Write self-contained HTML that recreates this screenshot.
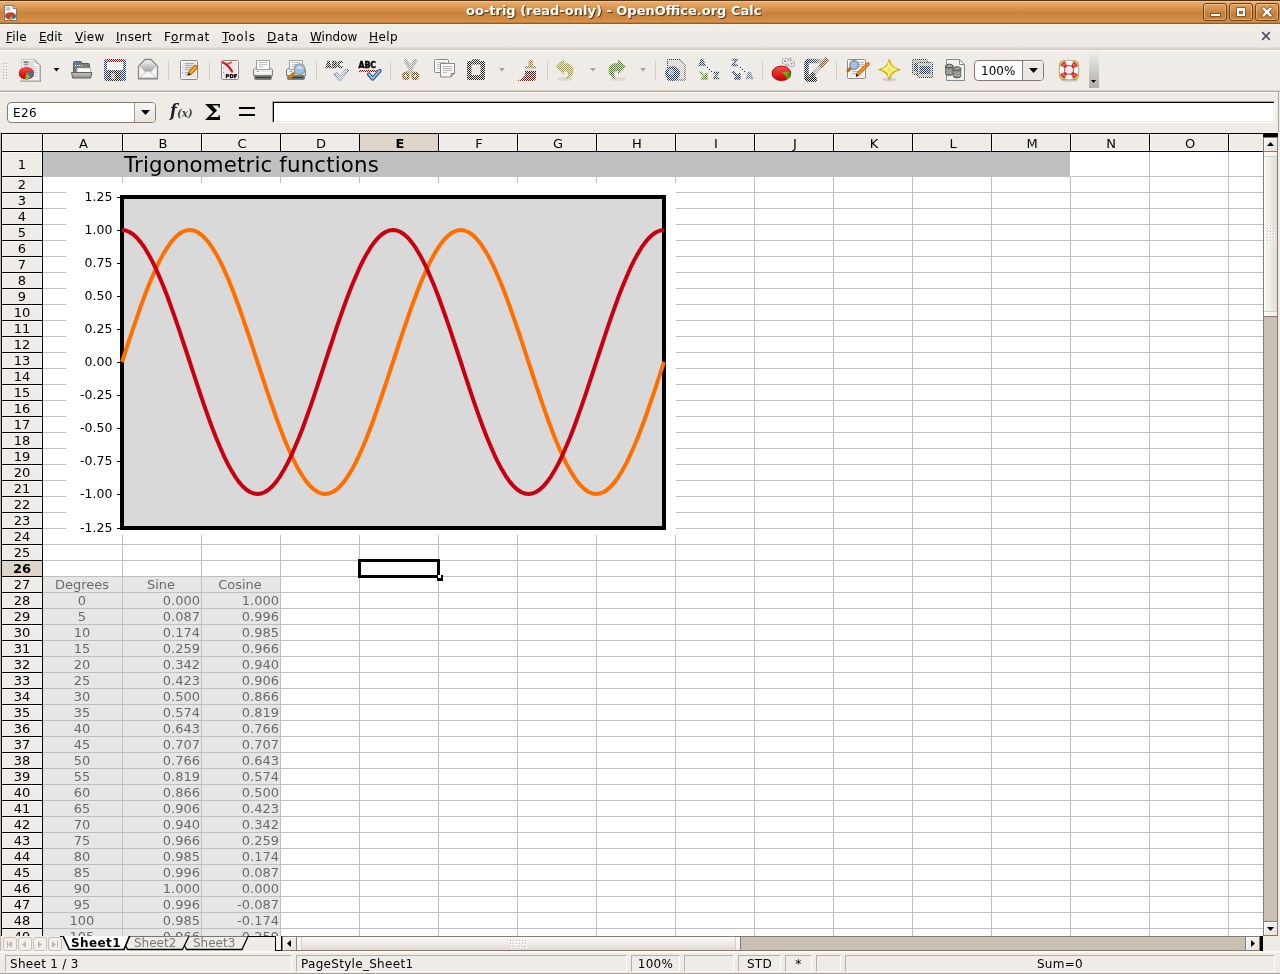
<!DOCTYPE html>
<html lang="en"><head><meta charset="utf-8"><title>oo-trig (read-only) - OpenOffice.org Calc</title>
<style>
*{box-sizing:border-box;margin:0;padding:0}
html,body{width:1280px;height:974px;overflow:hidden;background:#efebe7}
body{font-family:"DejaVu Sans","Liberation Sans",sans-serif;font-size:12px;color:#000;position:relative}
#w{position:absolute;left:0;top:0;width:1280px;height:974px;will-change:transform}
.a{position:absolute}
.t{position:absolute;white-space:nowrap;line-height:14px}
#title{left:0;top:0;width:1280px;height:24px;background:linear-gradient(#4f3318 0,#4f3318 1px,#f3c18b 1px,#f3c18b 2px,#e9ac6b 2px,#dc9a56 7px,#cd873f 12.5px,#c8823a 12.5px,#ce8842 17px,#d6914b 22px,#c07d3b 22px,#c07d3b 23px,#8a5e32 23px,#8a5e32 24px)}
#title .tt{left:466px;top:3px;font-weight:bold;font-size:13px;line-height:16px;color:#fff;text-shadow:1px 1px 1px #4a2e12}
.wb{position:absolute;top:3px;width:24px;height:18px;border:1px solid #6b4420;border-radius:3px;background:linear-gradient(#e2a365,#cf8a48 45%,#c37e3c 55%,#c8833f);box-shadow:inset 0 0 0 1px rgba(255,220,180,.45)}
#menu{left:0;top:24px;width:1280px;height:25px;background:linear-gradient(#f8f6f3 0,#f8f6f3 1px,#f1eeea 1px,#ebe7e2 24px)}
#menu span{position:absolute;top:6px;line-height:14px;font-size:12px}
#menu u{text-decoration:underline;text-underline-offset:1px}

#sheet{left:1px;top:133px;width:1262px;height:803px;background:#fff;overflow:hidden;border-left:1px solid #000;border-top:1px solid #000}
/* inside #sheet coordinates are offset by (2,134) */
.ch{position:absolute;top:0;height:18px;background:#efebe7;border-right:1px solid #000;border-bottom:1px solid #000;text-align:center;line-height:19px;font-size:13px;box-shadow:inset 1px 1px 0 #f9f7f5,inset 0 -1px 0 #f9f7f5;padding-left:2px}
.rh{position:absolute;left:0;width:41px;background:#efebe7;border-right:1px solid #000;border-bottom:1px solid #000;text-align:center;font-size:13px;box-shadow:inset 1px 1px 0 #f9f7f5,inset -1px 0 0 #f9f7f5}
.sel{background:#dfd6cb;font-weight:bold;box-shadow:none}
.gl{position:absolute;background:#c0c0c0}
.dc{position:absolute;height:15px;line-height:15px;font-size:13px;color:#6a6a6a;white-space:nowrap}

.sbb{position:absolute;border:1px solid #8a7a6a;background:linear-gradient(135deg,#f8f7f5,#e6e0da);box-shadow:inset 1px 1px 0 #fff}
.trough{position:absolute;background:#cabfb4;border:1px solid #8a7a6a}
.sf{position:absolute;top:955px;height:17px;border:1px solid;border-color:#b9b0a6 #fff #fff #b9b0a6;font-size:12px;letter-spacing:.3px;line-height:14px;padding-top:1px;white-space:nowrap;overflow:hidden}
.nb{position:absolute;top:937px;width:14px;height:14px;border:1px solid #cbbfb2;border-radius:3px;background:#f3f0ec}

#fbar .nbx{position:absolute;left:7px;top:102px;width:149px;height:21px;border:1px solid #8a7a6a;border-radius:4px;background:#fff;overflow:hidden}

#tb text{font-family:"DejaVu Sans","Liberation Sans",sans-serif}
</style></head>
<body>
<div id="w"><div id="title" class="a"><svg class="a" style="left:4px;top:5px" width="13" height="16" viewBox="1 0 12 16.500" preserveAspectRatio="none"><path d="M1.5 .5h8l3 3v12.5h-11z" fill="#fbfbfb" stroke="#7a7a7a"/><path d="M9.5 .5v3h3" fill="#ddd" stroke="#7a7a7a"/><path d="M3 3h4M3 5h4" stroke="#999"/><ellipse cx="7" cy="11.300" rx="5" ry="3.800" fill="#c8402a"/><path d="M7.500 11l4.500-.2a5 3.800 0 0 1-2.400 3.700z" fill="#1a7a9a"/><path d="M7.500 11l2 3.600a5 3.800 0 0 1-3 .5z" fill="#c8c830"/></svg><div class="t tt">oo-trig (read-only) - OpenOffice.org Calc</div><div class="wb" style="left:1203px"><i class="a" style="left:7px;top:10px;width:9px;height:2px;background:#fff;box-shadow:0 0 0 1px rgba(90,50,15,.55)"></i></div><div class="wb" style="left:1229px"><i class="a" style="left:7px;top:4px;width:8px;height:8px;border:2px solid #fff;border-top-width:3px;box-shadow:0 0 0 1px rgba(90,50,15,.55),inset 0 0 0 1px rgba(90,50,15,.55)"></i></div><div class="wb" style="left:1255px"><svg class="a" style="left:5px;top:2px" width="12" height="12" viewBox="0 0 12 12"><path d="M2.5 2.5l7 7M9.5 2.5l-7 7" stroke="#6b4420" stroke-width="4.2" stroke-linecap="round" opacity=".6"/><path d="M2.5 2.5l7 7M9.5 2.5l-7 7" stroke="#fff" stroke-width="2.4" stroke-linecap="round"/></svg></div></div><div id="menu" class="a"><span style="left:6px;letter-spacing:0.15px"><u>F</u>ile</span><span style="left:39px;letter-spacing:0px"><u>E</u>dit</span><span style="left:75px;letter-spacing:0.25px"><u>V</u>iew</span><span style="left:116px;letter-spacing:0.25px"><u>I</u>nsert</span><span style="left:164px;letter-spacing:0.6px">F<u>o</u>rmat</span><span style="left:222px;letter-spacing:0.85px"><u>T</u>ools</span><span style="left:267px;letter-spacing:0.8px"><u>D</u>ata</span><span style="left:310px;letter-spacing:0px"><u>W</u>indow</span><span style="left:369px;letter-spacing:0.4px"><u>H</u>elp</span><svg class="a" style="left:1261px;top:7px" width="10" height="10" viewBox="0 0 10 10"><path d="M1.2 1.2l7.6 7.6M8.800 1.2l-7.6 7.6" stroke="#4a5068" stroke-width="1.7"/></svg></div><div class="a" style="left:0;top:47px;width:1280px;height:3px;background:linear-gradient(#e8e3de,#cdc5bb)"></div><div class="a" style="left:0;top:50px;width:1280px;height:1px;background:#fbfaf9"></div><svg id="tb" class="a" style="left:0;top:50px" width="1280" height="42" viewBox="0 50 1280 42"><defs><pattern id="dp" width="2" height="2" patternUnits="userSpaceOnUse"><rect x="0" y="0" width="1" height="1" fill="#fff"/><rect x="1" y="1" width="1" height="1" fill="#fff"/></pattern><mask id="dm" maskUnits="userSpaceOnUse" x="0" y="50" width="1280" height="42"><rect x="0" y="50" width="1280" height="42" fill="url(#dp)"/></mask><linearGradient id="ovg" x1="0" y1="0" x2="0" y2="1"><stop offset="0" stop-color="#edeae6"/><stop offset="1" stop-color="#b3aea6"/></linearGradient><linearGradient id="redg" x1="0" y1="0" x2="0" y2="1"><stop offset="0" stop-color="#f75050"/><stop offset="1" stop-color="#c00"/></linearGradient><linearGradient id="gryg" x1="0" y1="0" x2="0" y2="1"><stop offset="0" stop-color="#c6c6c4"/><stop offset="1" stop-color="#8e908c"/></linearGradient><linearGradient id="envg" x1="0" y1="0" x2="0" y2="1"><stop offset="0" stop-color="#efefef"/><stop offset=".5" stop-color="#c4c4c4"/><stop offset="1" stop-color="#a4a4a4"/></linearGradient><linearGradient id="fadeg" x1="0" y1="0" x2="1" y2="0"><stop offset="0" stop-color="#14284f"/><stop offset=".5" stop-color="#14284f" stop-opacity=".8"/><stop offset="1" stop-color="#14284f" stop-opacity=".1"/></linearGradient></defs><rect x="3" y="63" width="1" height="1" fill="#aea69d"/><rect x="4" y="64" width="1" height="1" fill="#fff"/><rect x="6" y="63" width="1" height="1" fill="#aea69d"/><rect x="7" y="64" width="1" height="1" fill="#fff"/><rect x="3" y="66" width="1" height="1" fill="#aea69d"/><rect x="4" y="67" width="1" height="1" fill="#fff"/><rect x="6" y="66" width="1" height="1" fill="#aea69d"/><rect x="7" y="67" width="1" height="1" fill="#fff"/><rect x="3" y="69" width="1" height="1" fill="#aea69d"/><rect x="4" y="70" width="1" height="1" fill="#fff"/><rect x="6" y="69" width="1" height="1" fill="#aea69d"/><rect x="7" y="70" width="1" height="1" fill="#fff"/><rect x="3" y="72" width="1" height="1" fill="#aea69d"/><rect x="4" y="73" width="1" height="1" fill="#fff"/><rect x="6" y="72" width="1" height="1" fill="#aea69d"/><rect x="7" y="73" width="1" height="1" fill="#fff"/><rect x="3" y="75" width="1" height="1" fill="#aea69d"/><rect x="4" y="76" width="1" height="1" fill="#fff"/><rect x="6" y="75" width="1" height="1" fill="#aea69d"/><rect x="7" y="76" width="1" height="1" fill="#fff"/><rect x="3" y="78" width="1" height="1" fill="#aea69d"/><rect x="4" y="79" width="1" height="1" fill="#fff"/><rect x="6" y="78" width="1" height="1" fill="#aea69d"/><rect x="7" y="79" width="1" height="1" fill="#fff"/><path d="M20.500 81h20.500" stroke="#777" stroke-width="1.400" opacity=".75"/><path d="M40 65v16" stroke="#7c7c78" stroke-width="1.600" opacity=".8"/><path d="M21.500 59.500h13l5 5v16h-18z" fill="#f5f5f5" stroke="#c9c9c5"/><path d="M34.500 59.500q.5 4 5 5z" fill="#dadada" stroke="#a8a8a4" stroke-linejoin="round"/><rect x="23.500" y="61" width="5" height="2" fill="#8a8a8a"/><rect x="23.500" y="63.500" width="5" height="2" fill="#a0a0a0"/><rect x="29" y="61" width="5" height="4.500" fill="#dcdcdc"/><path d="M30 66.5h8" stroke="#d4d4d4"/><path d="M30 68.5h8" stroke="#d4d4d4"/><path d="M30 70.5h8" stroke="#d4d4d4"/><path d="M30 72.5h8" stroke="#d4d4d4"/><path d="M30 74.5h8" stroke="#d4d4d4"/><path d="M30 76.5h8" stroke="#d4d4d4"/><ellipse cx="26.400" cy="73.600" rx="7.600" ry="6" fill="#a00000"/><ellipse cx="26.400" cy="72.800" rx="7.600" ry="6" fill="url(#redg)"/><path d="M27 72.300h7a7.600 6 0 0 1-3.500 5.400z" fill="#3f6fb5"/><path d="M27 72.300l3.500 5.400a7.600 6 0 0 1-5.500 1.200z" fill="#7ec225"/><path d="M53.5 68h6l-3 3.500z" fill="#000"/><path d="M73.500 77v-14.500q0-1 1-1h6q1 0 1 1v1h7q1 0 1 1v12.500z" fill="#7b7d79" stroke="#5a5c58"/><rect x="74.500" y="62.500" width="6" height="2.500" fill="#5a75b8"/><path d="M75 65.500h1m1 0h1m1 0h1m1 0h1" stroke="#fff"/><rect x="77" y="68" width="13.500" height="4.500" fill="#fff" stroke="#9a9c98" stroke-width=".6"/><path d="M71.500 72.500h20.500l-1.300 5.500h-18z" fill="url(#gryg)" stroke="#5f615d" stroke-linejoin="round"/><g mask="url(#dm)"><rect x="104" y="59" width="22" height="22" rx="2" fill="#1f4587"/><rect x="107" y="59" width="16" height="3" fill="#b00"/><rect x="107" y="62" width="16" height="8" fill="#fff"/><rect x="108" y="71" width="13" height="10" fill="#222"/><rect x="111" y="73" width="4" height="6" fill="#999"/></g><path d="M138.500 66.500l6.500-7h6l6.500 7v12h-19z" fill="#f6f6f6" stroke-width="1.300" stroke="#888a85" stroke-linejoin="round"/><path d="M145.500 61h5l5.300 5.700-5 5.300h-5.600l-5-5.300z" fill="url(#envg)"/><path d="M140 77.500l6.500-6h3l6.500 6M140 66.500l6 6M156 66.500l-6 6" fill="none" stroke="#c9c9c9"/><path d="M138 79.500h20" stroke="#aaa" opacity=".7"/><path d="M168.5 61v19" stroke="#d4cfc9"/><rect x="180.5" y="60.5" width="17" height="19" rx="1.2" fill="#fff" stroke="#888a85"/><rect x="182" y="62" width="14" height="16" fill="#e8e8e8"/><path d="M185 63.5h9" stroke="#aaa"/><path d="M185 65.5h9" stroke="#aaa"/><path d="M185 67.5h9" stroke="#aaa"/><path d="M185 69.5h9" stroke="#aaa"/><path d="M185 72.5h4" stroke="#aaa"/><path d="M185 74.5h4" stroke="#aaa"/><rect x="182" y="67" width="1" height="1" fill="#999"/><rect x="182" y="72" width="1" height="1" fill="#999"/><path d="M190.500 72.500l5-5.200" stroke="#d96a00" stroke-width="4.600" stroke-linecap="round"/><path d="M190.500 72.500l5-5.200" stroke="#fcc030" stroke-width="1.800" stroke-linecap="round"/><path d="M187.300 75.700l1.200-3.200 2.300 2.200z" fill="#1a1a1a"/><path d="M209.5 61v19" stroke="#d4cfc9"/><rect x="221.5" y="60.5" width="17" height="19" rx="1.2" fill="#fff" stroke="#888a85"/><rect x="223" y="62" width="14" height="16" fill="#e8e8e8"/><rect x="223" y="67" width="1" height="1" fill="#999"/><rect x="223" y="72" width="1" height="1" fill="#999"/><path d="M223 62.500q5 2 9 9" stroke="#e01010" stroke-width="2.200" fill="none" stroke-linecap="round"/><path d="M225.500 64.500q3-.5 6.500-2.500" stroke="#e01010" stroke-width="1.500" fill="none" opacity=".7"/><rect x="225" y="73.500" width="12.500" height="5" fill="#f4f4f4"/><text x="225.600" y="77.900" font-size="5.200" font-weight="bold" stroke="#000" stroke-width=".35">PDF</text><path d="M253.5 70l2-2h15l2 2v5.500h-19z" fill="#ececec" stroke="#7e807c"/><rect x="256.5" y="60.500" width="13" height="9" fill="#fbfbfb" stroke="#a4a4a0"/><path d="M259 62.5h8" stroke="#c4c4c4"/><path d="M259 64.5h8" stroke="#c4c4c4"/><path d="M259 66.5h4" stroke="#c4c4c4"/><rect x="254.5" y="75.500" width="17" height="4" rx="1" fill="#6c6e6a" stroke="#7e807c"/><path d="M256 72.500h14" stroke="#fff"/><path d="M257 71.500h2" stroke="#999"/><path d="M256 77.500h14" stroke="#3a3c38"/><path d="M286.5 70l2-2h15l2 2v5.500h-19z" fill="#ececec" stroke="#7e807c"/><rect x="289.5" y="60.500" width="13" height="9" fill="#fbfbfb" stroke="#a4a4a0"/><path d="M292 62.5h8" stroke="#c4c4c4"/><path d="M292 64.5h8" stroke="#c4c4c4"/><path d="M292 66.5h4" stroke="#c4c4c4"/><rect x="287.5" y="75.500" width="17" height="4" rx="1" fill="#6c6e6a" stroke="#7e807c"/><path d="M289 72.500h14" stroke="#fff"/><path d="M290 71.500h2" stroke="#999"/><path d="M289 77.500h14" stroke="#3a3c38"/><path d="M290 77l3.500-3.200" stroke="#c8800f" stroke-width="3.600" stroke-linecap="round"/><circle cx="299.600" cy="69.300" r="5.400" fill="#9cc1ea" stroke="#9a9c98" stroke-width="1.400"/><path d="M296 68.800a3.800 3.800 0 0 1 7.200 0z" fill="#d4e4f6"/><path d="M316.5 61v19" stroke="#d4cfc9"/><g mask="url(#dm)"><text x="325.500" y="68.200" font-size="8.600" font-weight="bold" stroke="#000" stroke-width=".5" textLength="17.500" lengthAdjust="spacingAndGlyphs">ABC</text><path d="M335.8 74.2l3.800 4.500 7.200-8" fill="none" stroke="#204a87" stroke-width="3.800" stroke-linecap="round" stroke-linejoin="round"/><path d="M335.8 74.2l3.800 4.500 7.200-8" fill="none" stroke="#b9d2ee" stroke-width="1.800" stroke-linecap="round" stroke-linejoin="round"/></g><text x="358.500" y="68.200" font-size="8.600" font-weight="bold" stroke="#000" stroke-width=".5" textLength="17.500" lengthAdjust="spacingAndGlyphs">ABC</text><rect x="359" y="71" width="1" height="1" fill="#cc0000"/><rect x="360" y="70" width="1" height="1" fill="#cc0000"/><rect x="361" y="71" width="1" height="1" fill="#cc0000"/><rect x="362" y="70" width="1" height="1" fill="#cc0000"/><rect x="363" y="71" width="1" height="1" fill="#cc0000"/><rect x="364" y="70" width="1" height="1" fill="#cc0000"/><rect x="365" y="71" width="1" height="1" fill="#cc0000"/><rect x="366" y="70" width="1" height="1" fill="#cc0000"/><rect x="367" y="71" width="1" height="1" fill="#cc0000"/><rect x="368" y="70" width="1" height="1" fill="#cc0000"/><rect x="369" y="71" width="1" height="1" fill="#cc0000"/><rect x="370" y="70" width="1" height="1" fill="#cc0000"/><rect x="371" y="71" width="1" height="1" fill="#cc0000"/><rect x="372" y="70" width="1" height="1" fill="#cc0000"/><rect x="373" y="71" width="1" height="1" fill="#cc0000"/><rect x="374" y="70" width="1" height="1" fill="#cc0000"/><rect x="375" y="71" width="1" height="1" fill="#cc0000"/><rect x="376" y="70" width="1" height="1" fill="#cc0000"/><path d="M368.8 74.2l3.800 4.500 7.200-8" fill="none" stroke="#204a87" stroke-width="3.800" stroke-linecap="round" stroke-linejoin="round"/><path d="M368.8 74.2l3.800 4.500 7.200-8" fill="none" stroke="#9fc0e8" stroke-width="1.800" stroke-linecap="round" stroke-linejoin="round"/><path d="M390.5 61v19" stroke="#d4cfc9"/><g mask="url(#dm)"><path d="M405.600 60.500l7.600 13M415.400 60.500l-7.600 13" stroke="#9c9c9c" stroke-width="4" stroke-linecap="round"/><ellipse cx="405.800" cy="76" rx="2.500" ry="2.800" fill="none" stroke="#7a4a00" stroke-width="3"/><ellipse cx="415.200" cy="76" rx="2.500" ry="2.800" fill="none" stroke="#7a4a00" stroke-width="3"/></g><rect x="434.5" y="59.5" width="14" height="13" rx="1.2" fill="#f6f6f6" stroke="#888a85"/><path d="M437 62.5h9" stroke="#c0c0c0"/><path d="M437 64.5h9" stroke="#c0c0c0"/><path d="M437 66.5h9" stroke="#c0c0c0"/><path d="M437 68.5h9" stroke="#c0c0c0"/><path d="M440.500 63.500h14v10l-3.500 3.500h-10.500z" fill="#f8f8f8" stroke="#888a85" stroke-linejoin="round"/><path d="M454.500 73.500h-3.500v3.500z" fill="#ccc" stroke="#888a85" stroke-linejoin="round"/><path d="M443 66.5h9" stroke="#b8b8b8"/><path d="M443 68.5h9" stroke="#b8b8b8"/><path d="M443 70.5h9" stroke="#b8b8b8"/><path d="M443 72.5h4" stroke="#b8b8b8"/><g mask="url(#dm)"><rect x="467" y="61" width="18" height="19" rx="1.500" fill="#222"/><rect x="472" y="59" width="8" height="4" rx="1.500" fill="#333"/><rect x="471.500" y="64.500" width="9" height="10.500" fill="#e4e4e4"/></g><path d="M499 68h6l-3 3.500z" fill="#a9a39b"/><g mask="url(#dm)"><rect x="528.500" y="59.500" width="4.500" height="7.500" rx="2" fill="#a47a3a"/><rect x="525" y="66" width="11" height="2.500" fill="#a47a3a"/><rect x="525" y="68.500" width="11" height="2.500" fill="#d8d8d8"/><rect x="525" y="71" width="11" height="3" fill="#1a1a1a"/><path d="M525 74h11v5l-2 2h-18q7-1.500 9-7z" fill="#8a1010"/></g><path d="M547.5 61v19" stroke="#d4cfc9"/><g mask="url(#dm)"><path d="M556 66.500l8-7.500v4q10 0 9.500 8.500q-.5 5.500-8 8q3-4 2.500-6.500q-.5-2-4-2v3.500z" fill="#a39a28"/></g><ellipse cx="565" cy="79" rx="8" ry="2" fill="#000" opacity=".07"/><ellipse cx="618" cy="79" rx="8" ry="2" fill="#000" opacity=".07"/><path d="M590 68h6l-3 3.500z" fill="#a9a39b"/><g mask="url(#dm)"><path d="M626 66.500l-8-7.500v4q-10 0-9.500 8.500q.5 5.500 8 8q-3-4-2.500-6.500q.5-2 4-2v3.500z" fill="#3d7d12"/></g><path d="M640 68h6l-3 3.500z" fill="#a9a39b"/><path d="M655.5 61v19" stroke="#d4cfc9"/><g mask="url(#dm)"><path d="M667.500 59.500h12.500l5 5v15.500h-17.500z" fill="#d0d0d0" stroke="#333"/><circle cx="672.500" cy="73.500" r="7.500" fill="#1d3a6a"/><circle cx="671" cy="72" r="3" fill="#7a94b8"/></g><g mask="url(#dm)"><text x="698.500" y="66" font-size="9" font-weight="bold" stroke="#17335f" stroke-width=".5" fill="#17335f">A</text><text x="713" y="79" font-size="9" font-weight="bold" stroke="#17335f" stroke-width=".5" fill="#17335f">Z</text><path d="M699.500 71.500l7 7m0-5.500v5.500h-5.500" stroke="#3f8a05" stroke-width="2.400" fill="none"/><path d="M702 78.500l4.500-4.500v4.500z" fill="#3f8a05"/><text x="731.500" y="66" font-size="9" font-weight="bold" stroke="#17335f" stroke-width=".5" fill="#17335f">Z</text><text x="746" y="79" font-size="9" font-weight="bold" stroke="#4b6c9f" stroke-width=".5" fill="#4b6c9f">A</text><path d="M732.500 71.500l7 7m0-5.500v5.500h-5.500" stroke="#17335f" stroke-width="2.400" fill="none"/><path d="M735 78.500l4.500-4.500v4.500z" fill="#17335f"/></g><rect x="707" y="67" width="1" height="1" fill="#17335f"/><rect x="709" y="69" width="1" height="1" fill="#17335f"/><rect x="711" y="71" width="1" height="1" fill="#17335f"/><rect x="740" y="67" width="1" height="1" fill="#17335f"/><rect x="742" y="69" width="1" height="1" fill="#17335f"/><rect x="744" y="71" width="1" height="1" fill="#17335f"/><path d="M762.5 61v19" stroke="#d4cfc9"/><ellipse cx="781.500" cy="75" rx="10" ry="6.500" fill="#999" opacity=".35"/><ellipse cx="781.400" cy="73.300" rx="9.300" ry="7.200" fill="url(#redg)" stroke="#c00000"/><path d="M781.500 72l8 .3q1.500 1.500 1 4.200l-2.800 2.500q-2.500-5-6.200-7z" fill="#56c510"/><path d="M789.500 72.300q1.500 1.500 1 4.200l-2.800 2.500q.5-3-1-5z" fill="#3a9306"/><path d="M790.200 59l-3.400 7" stroke="#8c8c88" stroke-width="2.600" stroke-linecap="round"/><circle cx="785.200" cy="61.200" r="1.900" fill="#8c8c88" stroke="#8c8c88" stroke-width="2.800"/><circle cx="791.700" cy="63.700" r="1.900" fill="#8c8c88" stroke="#8c8c88" stroke-width="2.800"/><path d="M790.200 59l-3.400 7" stroke="#fff" stroke-width="1.100" stroke-linecap="round"/><circle cx="785.200" cy="61.200" r="1.900" fill="none" stroke="#fff" stroke-width="1.500"/><circle cx="791.700" cy="63.700" r="1.900" fill="none" stroke="#fff" stroke-width="1.500"/><g mask="url(#dm)"><rect x="807" y="58.800" width="17" height="4.500" fill="url(#fadeg)"/><path d="M809 61q-2.500 0-2.500 2.500v13q0 3 3 3h5" fill="none" stroke="#14284f" stroke-width="4.500"/><path d="M814.500 77v2.500h-5.500q-2.500 0-2.500-2.500" fill="none" stroke="#000" stroke-width="4.500"/><path d="M827.500 58.500l-8 9" stroke="#7a4a18" stroke-width="4.600"/><path d="M819.500 67.500l-5 5.500" stroke="#aaa" stroke-width="4.600"/><path d="M814.500 73l-5.500 6.500" stroke="#111" stroke-width="4.600"/></g><path d="M836.5 61v19" stroke="#d4cfc9"/><rect x="847.5" y="59.5" width="18" height="19" rx="1.2" fill="#fff" stroke="#888a85"/><rect x="849" y="61" width="15" height="16" fill="#ececec"/><path d="M858 62.5h6" stroke="#bbb"/><path d="M858 64.5h6" stroke="#bbb"/><path d="M858 66.5h6" stroke="#bbb"/><path d="M852 71.5h6" stroke="#bbb"/><path d="M852 73.5h6" stroke="#bbb"/><path d="M848 70.500l3.500-3" stroke="#b8730c" stroke-width="3.400" stroke-linecap="round"/><circle cx="854.100" cy="65" r="4.300" fill="#9cc0e6" stroke="#888a85" stroke-width="1.300"/><path d="M857.500 74.500l10.500-10.500" stroke="#ce5c00" stroke-width="3.500" stroke-linecap="round"/><path d="M858 74l10-10" stroke="#f8901e" stroke-width="1.900" stroke-linecap="round" stroke-dasharray="1 .6"/><path d="M856.200 76.200l1.800-.6-1.200-1.200z" fill="#000" stroke="#000" stroke-width=".8"/><ellipse cx="889.500" cy="79.500" rx="7" ry="1.800" fill="#999" opacity=".35"/><path d="M889.400 59.500q1.500 8 10.300 10.200q-8.800 2-10.300 10q-1.500-8-10.300-10q8.800-2.200 10.300-10.200z" fill="#f8ee68" stroke="#c8a800" stroke-width="1.200" stroke-linejoin="round"/><path d="M889.400 62v15.500M881.500 69.700h15.800" stroke="#e2cf30" stroke-width="1"/><path d="M889.400 69.700l-1.600-5.500 1.600-3.500zM889.400 69.700l5.500-1.500 3.500 1.500zM889.400 69.700l-1.600 5.500 1.600 3zM889.400 69.700l-5.500-1.500-3 1.500z" fill="#fffde0" opacity=".9"/><g mask="url(#dm)"><rect x="912.500" y="59.500" width="15" height="15" rx="1" fill="#aaa" stroke="#333"/><rect x="914" y="63" width="5" height="8" fill="#1f4587"/><rect x="917.500" y="62.500" width="15" height="15" rx="1" fill="#aaa" stroke="#333"/><rect x="919.500" y="66" width="11" height="8" fill="#17366f"/></g><path d="M946.500 59.500h13l5 5v16h-18z" fill="#f1f1f1" stroke="#888a85"/><path d="M959.500 59.500v5h5z" fill="#fff" stroke="#888a85" stroke-linejoin="round"/><path d="M945.6 66v7.500a3.700 1.800 0 0 0 7.400 0v-7.500z" fill="#8c8e8a" stroke="#50524f"/><ellipse cx="949.3" cy="66" rx="3.700" ry="1.800" fill="#a5a7a3" stroke="#50524f"/><path d="M945.6 69a3.700 1.800 0 0 0 7.400 0M945.6 71.5a3.700 1.800 0 0 0 7.400 0" fill="none" stroke="#b9bbb7" stroke-width=".8"/><path d="M953.3 68.5v7.500a3.700 1.800 0 0 0 7.400 0v-7.500z" fill="#8c8e8a" stroke="#50524f"/><ellipse cx="957" cy="68.5" rx="3.700" ry="1.800" fill="#a5a7a3" stroke="#50524f"/><path d="M953.3 71.5a3.700 1.800 0 0 0 7.400 0M953.3 74a3.700 1.800 0 0 0 7.400 0" fill="none" stroke="#b9bbb7" stroke-width=".8"/><rect x="974.500" y="60.500" width="69" height="20" rx="3.500" fill="#fff" stroke="#8a7a6a"/><path d="M1023 61h17q3 0 3 3v13q0 3-3 3h-17z" fill="#ece8e3"/><path d="M1022.500 61v19" stroke="#8a7a6a"/><path d="M1023.500 61.500h17q2.500 0 2.500 2.500" stroke="#fff" fill="none" opacity=".8"/><text x="981" y="75" font-size="12">100%</text><path d="M1029 68h9l-4.500 5z" fill="#000"/><ellipse cx="1069.500" cy="80" rx="9" ry="1.600" fill="#888" opacity=".4"/><rect x="1059.500" y="60.500" width="19" height="19" rx="5" fill="none" stroke="#c4a000" stroke-width="1.200"/><circle cx="1069" cy="70" r="7.200" fill="none" stroke="#f6f6f4" stroke-width="5.400"/><circle cx="1069" cy="70" r="7.200" fill="none" stroke="#d81818" stroke-width="5.400" stroke-dasharray="4.600 6.710" stroke-dashoffset="-3.350"/><circle cx="1069" cy="70" r="7.200" fill="none" stroke="#f46a6a" stroke-width="2" stroke-dasharray="3.600 7.710" stroke-dashoffset="-3.850"/><circle cx="1069" cy="70" r="9.900" fill="none" stroke="#b0b0ac" stroke-width=".9"/><circle cx="1069" cy="70" r="4.500" fill="none" stroke="#b43030" stroke-width=".9"/><rect x="1089" y="53" width="10" height="35" fill="url(#ovg)"/><path d="M1091 80h5l-2.500 3z" fill="#000"/></svg><div id="fbar"><div class="a" style="left:0;top:90px;width:1280px;height:1px;background:#d9d2ca"></div><div class="a" style="left:0;top:91px;width:1280px;height:1px;background:#b9aea2"></div><div class="a" style="left:0;top:92px;width:1280px;height:1px;background:#fbfaf9"></div><div class="nbx"><div class="t" style="left:5px;top:3px;font-size:12px;letter-spacing:.4px">E26</div><div class="a" style="left:126px;top:0;width:22px;height:19px;border-left:1px solid #a8998a;background:linear-gradient(#f7f5f3,#e8e3dd)"></div></div><svg class="a" style="left:141px;top:110px" width="9" height="5"><path d="M0 0h9l-4.500 5z" fill="#000"/></svg><div class="t" style="left:170px;top:101px;font-family:'DejaVu Serif','Liberation Serif',serif;font-style:italic;font-weight:bold;font-size:16px;line-height:20px;color:#222">f<span style="font-size:10.500px;color:#4a4a44;letter-spacing:-.2px;position:relative;top:0.500px">(x)</span></div><div class="t" style="left:204px;top:100px;transform:scaleX(1.13);transform-origin:0 0;font-family:'DejaVu Serif','Liberation Serif',serif;font-weight:bold;font-size:22px;line-height:24px">Σ</div><div class="a" style="left:239px;top:107px;width:16px;height:2px;background:#000"></div><div class="a" style="left:239px;top:114px;width:16px;height:2px;background:#000"></div><div class="a" style="left:272px;top:101px;width:1003px;height:22px;background:#fff;border:1px solid;border-color:#b0a79d #fff #fff #b0a79d;box-shadow:inset 1px 1px 0 #000,inset -1px -1px 0 #ece6de"></div><div class="a" style="left:1278px;top:92px;width:1px;height:40px;background:#aca59d"></div></div><div class="a" style="left:0;top:132px;width:1px;height:819px;background:#c0bab3"></div><div id="sheet" class="a"><div class="a" style="left:41px;top:18px;width:1027px;height:25px;background:#c0c0c0"></div><div class="a" style="left:41px;top:443px;width:237px;height:359px;background:#e6e6e6"></div><i class="gl" style="left:120px;top:43px;width:1px;height:759px"></i><i class="gl" style="left:199px;top:43px;width:1px;height:759px"></i><i class="gl" style="left:278px;top:43px;width:1px;height:759px"></i><i class="gl" style="left:357px;top:43px;width:1px;height:759px"></i><i class="gl" style="left:436px;top:43px;width:1px;height:759px"></i><i class="gl" style="left:515px;top:43px;width:1px;height:759px"></i><i class="gl" style="left:594px;top:43px;width:1px;height:759px"></i><i class="gl" style="left:673px;top:43px;width:1px;height:759px"></i><i class="gl" style="left:752px;top:43px;width:1px;height:759px"></i><i class="gl" style="left:831px;top:43px;width:1px;height:759px"></i><i class="gl" style="left:910px;top:43px;width:1px;height:759px"></i><i class="gl" style="left:989px;top:43px;width:1px;height:759px"></i><i class="gl" style="left:1068px;top:43px;width:1px;height:759px"></i><i class="gl" style="left:1147px;top:43px;width:1px;height:759px"></i><i class="gl" style="left:1226px;top:43px;width:1px;height:759px"></i><i class="gl" style="left:1147px;top:18px;width:1px;height:25px"></i><i class="gl" style="left:1226px;top:18px;width:1px;height:25px"></i><i class="gl" style="left:1069px;top:42px;width:192px;height:1px"></i><i class="gl" style="left:41px;top:58px;width:1220px;height:1px"></i><i class="gl" style="left:41px;top:74px;width:1220px;height:1px"></i><i class="gl" style="left:41px;top:90px;width:1220px;height:1px"></i><i class="gl" style="left:41px;top:106px;width:1220px;height:1px"></i><i class="gl" style="left:41px;top:122px;width:1220px;height:1px"></i><i class="gl" style="left:41px;top:138px;width:1220px;height:1px"></i><i class="gl" style="left:41px;top:154px;width:1220px;height:1px"></i><i class="gl" style="left:41px;top:170px;width:1220px;height:1px"></i><i class="gl" style="left:41px;top:186px;width:1220px;height:1px"></i><i class="gl" style="left:41px;top:202px;width:1220px;height:1px"></i><i class="gl" style="left:41px;top:218px;width:1220px;height:1px"></i><i class="gl" style="left:41px;top:234px;width:1220px;height:1px"></i><i class="gl" style="left:41px;top:250px;width:1220px;height:1px"></i><i class="gl" style="left:41px;top:266px;width:1220px;height:1px"></i><i class="gl" style="left:41px;top:282px;width:1220px;height:1px"></i><i class="gl" style="left:41px;top:298px;width:1220px;height:1px"></i><i class="gl" style="left:41px;top:314px;width:1220px;height:1px"></i><i class="gl" style="left:41px;top:330px;width:1220px;height:1px"></i><i class="gl" style="left:41px;top:346px;width:1220px;height:1px"></i><i class="gl" style="left:41px;top:362px;width:1220px;height:1px"></i><i class="gl" style="left:41px;top:378px;width:1220px;height:1px"></i><i class="gl" style="left:41px;top:394px;width:1220px;height:1px"></i><i class="gl" style="left:41px;top:410px;width:1220px;height:1px"></i><i class="gl" style="left:41px;top:426px;width:1220px;height:1px"></i><i class="gl" style="left:41px;top:442px;width:1220px;height:1px"></i><i class="gl" style="left:41px;top:458px;width:1220px;height:1px"></i><i class="gl" style="left:41px;top:474px;width:1220px;height:1px"></i><i class="gl" style="left:41px;top:490px;width:1220px;height:1px"></i><i class="gl" style="left:41px;top:506px;width:1220px;height:1px"></i><i class="gl" style="left:41px;top:522px;width:1220px;height:1px"></i><i class="gl" style="left:41px;top:538px;width:1220px;height:1px"></i><i class="gl" style="left:41px;top:554px;width:1220px;height:1px"></i><i class="gl" style="left:41px;top:570px;width:1220px;height:1px"></i><i class="gl" style="left:41px;top:586px;width:1220px;height:1px"></i><i class="gl" style="left:41px;top:602px;width:1220px;height:1px"></i><i class="gl" style="left:41px;top:618px;width:1220px;height:1px"></i><i class="gl" style="left:41px;top:634px;width:1220px;height:1px"></i><i class="gl" style="left:41px;top:650px;width:1220px;height:1px"></i><i class="gl" style="left:41px;top:666px;width:1220px;height:1px"></i><i class="gl" style="left:41px;top:682px;width:1220px;height:1px"></i><i class="gl" style="left:41px;top:698px;width:1220px;height:1px"></i><i class="gl" style="left:41px;top:714px;width:1220px;height:1px"></i><i class="gl" style="left:41px;top:730px;width:1220px;height:1px"></i><i class="gl" style="left:41px;top:746px;width:1220px;height:1px"></i><i class="gl" style="left:41px;top:762px;width:1220px;height:1px"></i><i class="gl" style="left:41px;top:778px;width:1220px;height:1px"></i><i class="gl" style="left:41px;top:794px;width:1220px;height:1px"></i><i class="gl" style="left:41px;top:810px;width:1220px;height:1px"></i><div class="t" style="left:122px;top:19px;font-size:21.33px;letter-spacing:.15px;line-height:24px">Trigonometric functions</div><div class="dc" style="left:41px;top:443px;width:78px;text-align:center">Degrees</div><div class="dc" style="left:120px;top:443px;width:78px;text-align:center">Sine</div><div class="dc" style="left:199px;top:443px;width:78px;text-align:center">Cosine</div><div class="dc" style="left:41px;top:459px;width:78px;text-align:center">0</div><div class="dc" style="left:120px;top:459px;width:78px;text-align:right">0.000</div><div class="dc" style="left:199px;top:459px;width:78px;text-align:right">1.000</div><div class="dc" style="left:41px;top:475px;width:78px;text-align:center">5</div><div class="dc" style="left:120px;top:475px;width:78px;text-align:right">0.087</div><div class="dc" style="left:199px;top:475px;width:78px;text-align:right">0.996</div><div class="dc" style="left:41px;top:491px;width:78px;text-align:center">10</div><div class="dc" style="left:120px;top:491px;width:78px;text-align:right">0.174</div><div class="dc" style="left:199px;top:491px;width:78px;text-align:right">0.985</div><div class="dc" style="left:41px;top:507px;width:78px;text-align:center">15</div><div class="dc" style="left:120px;top:507px;width:78px;text-align:right">0.259</div><div class="dc" style="left:199px;top:507px;width:78px;text-align:right">0.966</div><div class="dc" style="left:41px;top:523px;width:78px;text-align:center">20</div><div class="dc" style="left:120px;top:523px;width:78px;text-align:right">0.342</div><div class="dc" style="left:199px;top:523px;width:78px;text-align:right">0.940</div><div class="dc" style="left:41px;top:539px;width:78px;text-align:center">25</div><div class="dc" style="left:120px;top:539px;width:78px;text-align:right">0.423</div><div class="dc" style="left:199px;top:539px;width:78px;text-align:right">0.906</div><div class="dc" style="left:41px;top:555px;width:78px;text-align:center">30</div><div class="dc" style="left:120px;top:555px;width:78px;text-align:right">0.500</div><div class="dc" style="left:199px;top:555px;width:78px;text-align:right">0.866</div><div class="dc" style="left:41px;top:571px;width:78px;text-align:center">35</div><div class="dc" style="left:120px;top:571px;width:78px;text-align:right">0.574</div><div class="dc" style="left:199px;top:571px;width:78px;text-align:right">0.819</div><div class="dc" style="left:41px;top:587px;width:78px;text-align:center">40</div><div class="dc" style="left:120px;top:587px;width:78px;text-align:right">0.643</div><div class="dc" style="left:199px;top:587px;width:78px;text-align:right">0.766</div><div class="dc" style="left:41px;top:603px;width:78px;text-align:center">45</div><div class="dc" style="left:120px;top:603px;width:78px;text-align:right">0.707</div><div class="dc" style="left:199px;top:603px;width:78px;text-align:right">0.707</div><div class="dc" style="left:41px;top:619px;width:78px;text-align:center">50</div><div class="dc" style="left:120px;top:619px;width:78px;text-align:right">0.766</div><div class="dc" style="left:199px;top:619px;width:78px;text-align:right">0.643</div><div class="dc" style="left:41px;top:635px;width:78px;text-align:center">55</div><div class="dc" style="left:120px;top:635px;width:78px;text-align:right">0.819</div><div class="dc" style="left:199px;top:635px;width:78px;text-align:right">0.574</div><div class="dc" style="left:41px;top:651px;width:78px;text-align:center">60</div><div class="dc" style="left:120px;top:651px;width:78px;text-align:right">0.866</div><div class="dc" style="left:199px;top:651px;width:78px;text-align:right">0.500</div><div class="dc" style="left:41px;top:667px;width:78px;text-align:center">65</div><div class="dc" style="left:120px;top:667px;width:78px;text-align:right">0.906</div><div class="dc" style="left:199px;top:667px;width:78px;text-align:right">0.423</div><div class="dc" style="left:41px;top:683px;width:78px;text-align:center">70</div><div class="dc" style="left:120px;top:683px;width:78px;text-align:right">0.940</div><div class="dc" style="left:199px;top:683px;width:78px;text-align:right">0.342</div><div class="dc" style="left:41px;top:699px;width:78px;text-align:center">75</div><div class="dc" style="left:120px;top:699px;width:78px;text-align:right">0.966</div><div class="dc" style="left:199px;top:699px;width:78px;text-align:right">0.259</div><div class="dc" style="left:41px;top:715px;width:78px;text-align:center">80</div><div class="dc" style="left:120px;top:715px;width:78px;text-align:right">0.985</div><div class="dc" style="left:199px;top:715px;width:78px;text-align:right">0.174</div><div class="dc" style="left:41px;top:731px;width:78px;text-align:center">85</div><div class="dc" style="left:120px;top:731px;width:78px;text-align:right">0.996</div><div class="dc" style="left:199px;top:731px;width:78px;text-align:right">0.087</div><div class="dc" style="left:41px;top:747px;width:78px;text-align:center">90</div><div class="dc" style="left:120px;top:747px;width:78px;text-align:right">1.000</div><div class="dc" style="left:199px;top:747px;width:78px;text-align:right">0.000</div><div class="dc" style="left:41px;top:763px;width:78px;text-align:center">95</div><div class="dc" style="left:120px;top:763px;width:78px;text-align:right">0.996</div><div class="dc" style="left:199px;top:763px;width:78px;text-align:right">-0.087</div><div class="dc" style="left:41px;top:779px;width:78px;text-align:center">100</div><div class="dc" style="left:120px;top:779px;width:78px;text-align:right">0.985</div><div class="dc" style="left:199px;top:779px;width:78px;text-align:right">-0.174</div><div class="dc" style="left:41px;top:795px;width:78px;text-align:center">105</div><div class="dc" style="left:120px;top:795px;width:78px;text-align:right">0.966</div><div class="dc" style="left:199px;top:795px;width:78px;text-align:right">-0.259</div><div class="ch" style="left:0;width:41px"></div><div class="ch" style="left:41px;width:80px">A</div><div class="ch" style="left:121px;width:79px">B</div><div class="ch" style="left:200px;width:79px">C</div><div class="ch" style="left:279px;width:79px">D</div><div class="ch sel" style="left:358px;width:79px">E</div><div class="ch" style="left:437px;width:79px">F</div><div class="ch" style="left:516px;width:79px">G</div><div class="ch" style="left:595px;width:79px">H</div><div class="ch" style="left:674px;width:79px">I</div><div class="ch" style="left:753px;width:79px">J</div><div class="ch" style="left:832px;width:79px">K</div><div class="ch" style="left:911px;width:79px">L</div><div class="ch" style="left:990px;width:79px">M</div><div class="ch" style="left:1069px;width:79px">N</div><div class="ch" style="left:1148px;width:79px">O</div><div class="ch" style="left:1227px;width:40px;border-right:0"></div><div class="rh" style="top:18px;height:25px;line-height:25px">1</div><div class="rh" style="top:43px;height:16px;line-height:15px">2</div><div class="rh" style="top:59px;height:16px;line-height:15px">3</div><div class="rh" style="top:75px;height:16px;line-height:15px">4</div><div class="rh" style="top:91px;height:16px;line-height:15px">5</div><div class="rh" style="top:107px;height:16px;line-height:15px">6</div><div class="rh" style="top:123px;height:16px;line-height:15px">7</div><div class="rh" style="top:139px;height:16px;line-height:15px">8</div><div class="rh" style="top:155px;height:16px;line-height:15px">9</div><div class="rh" style="top:171px;height:16px;line-height:15px">10</div><div class="rh" style="top:187px;height:16px;line-height:15px">11</div><div class="rh" style="top:203px;height:16px;line-height:15px">12</div><div class="rh" style="top:219px;height:16px;line-height:15px">13</div><div class="rh" style="top:235px;height:16px;line-height:15px">14</div><div class="rh" style="top:251px;height:16px;line-height:15px">15</div><div class="rh" style="top:267px;height:16px;line-height:15px">16</div><div class="rh" style="top:283px;height:16px;line-height:15px">17</div><div class="rh" style="top:299px;height:16px;line-height:15px">18</div><div class="rh" style="top:315px;height:16px;line-height:15px">19</div><div class="rh" style="top:331px;height:16px;line-height:15px">20</div><div class="rh" style="top:347px;height:16px;line-height:15px">21</div><div class="rh" style="top:363px;height:16px;line-height:15px">22</div><div class="rh" style="top:379px;height:16px;line-height:15px">23</div><div class="rh" style="top:395px;height:16px;line-height:15px">24</div><div class="rh" style="top:411px;height:16px;line-height:15px">25</div><div class="rh sel" style="top:427px;height:16px;line-height:15px">26</div><div class="rh" style="top:443px;height:16px;line-height:15px">27</div><div class="rh" style="top:459px;height:16px;line-height:15px">28</div><div class="rh" style="top:475px;height:16px;line-height:15px">29</div><div class="rh" style="top:491px;height:16px;line-height:15px">30</div><div class="rh" style="top:507px;height:16px;line-height:15px">31</div><div class="rh" style="top:523px;height:16px;line-height:15px">32</div><div class="rh" style="top:539px;height:16px;line-height:15px">33</div><div class="rh" style="top:555px;height:16px;line-height:15px">34</div><div class="rh" style="top:571px;height:16px;line-height:15px">35</div><div class="rh" style="top:587px;height:16px;line-height:15px">36</div><div class="rh" style="top:603px;height:16px;line-height:15px">37</div><div class="rh" style="top:619px;height:16px;line-height:15px">38</div><div class="rh" style="top:635px;height:16px;line-height:15px">39</div><div class="rh" style="top:651px;height:16px;line-height:15px">40</div><div class="rh" style="top:667px;height:16px;line-height:15px">41</div><div class="rh" style="top:683px;height:16px;line-height:15px">42</div><div class="rh" style="top:699px;height:16px;line-height:15px">43</div><div class="rh" style="top:715px;height:16px;line-height:15px">44</div><div class="rh" style="top:731px;height:16px;line-height:15px">45</div><div class="rh" style="top:747px;height:16px;line-height:15px">46</div><div class="rh" style="top:763px;height:16px;line-height:15px">47</div><div class="rh" style="top:779px;height:16px;line-height:15px">48</div><div class="rh" style="top:795px;height:16px;line-height:15px">49</div></div><svg class="a" style="left:66px;top:183px" width="610" height="352" viewBox="66 183 610 352"><rect x="66" y="183" width="610" height="352" fill="#fff"/><rect x="122" y="197" width="542" height="331" fill="#d9d9d9" stroke="#000" stroke-width="4"/><path d="M117 197.5h4" stroke="#000" stroke-width="1"/><text x="112.400" y="201.2" text-anchor="end" font-size="12.5" font-family="DejaVu Sans,Liberation Sans,sans-serif">1.25</text><path d="M117 230.5h4" stroke="#000" stroke-width="1"/><text x="112.400" y="234.2" text-anchor="end" font-size="12.5" font-family="DejaVu Sans,Liberation Sans,sans-serif">1.00</text><path d="M117 263.5h4" stroke="#000" stroke-width="1"/><text x="112.400" y="267.2" text-anchor="end" font-size="12.5" font-family="DejaVu Sans,Liberation Sans,sans-serif">0.75</text><path d="M117 296.5h4" stroke="#000" stroke-width="1"/><text x="112.400" y="300.2" text-anchor="end" font-size="12.5" font-family="DejaVu Sans,Liberation Sans,sans-serif">0.50</text><path d="M117 329.5h4" stroke="#000" stroke-width="1"/><text x="112.400" y="333.2" text-anchor="end" font-size="12.5" font-family="DejaVu Sans,Liberation Sans,sans-serif">0.25</text><path d="M117 362.5h4" stroke="#000" stroke-width="1"/><text x="112.400" y="366.2" text-anchor="end" font-size="12.5" font-family="DejaVu Sans,Liberation Sans,sans-serif">0.00</text><path d="M117 395.5h4" stroke="#000" stroke-width="1"/><text x="112.400" y="399.2" text-anchor="end" font-size="12.5" font-family="DejaVu Sans,Liberation Sans,sans-serif">-0.25</text><path d="M117 428.5h4" stroke="#000" stroke-width="1"/><text x="112.400" y="432.2" text-anchor="end" font-size="12.5" font-family="DejaVu Sans,Liberation Sans,sans-serif">-0.50</text><path d="M117 461.5h4" stroke="#000" stroke-width="1"/><text x="112.400" y="465.2" text-anchor="end" font-size="12.5" font-family="DejaVu Sans,Liberation Sans,sans-serif">-0.75</text><path d="M117 494.5h4" stroke="#000" stroke-width="1"/><text x="112.400" y="498.2" text-anchor="end" font-size="12.5" font-family="DejaVu Sans,Liberation Sans,sans-serif">-1.00</text><path d="M117 528.5h4" stroke="#000" stroke-width="1"/><text x="112.400" y="532.2" text-anchor="end" font-size="12.5" font-family="DejaVu Sans,Liberation Sans,sans-serif">-1.25</text><polyline points="122.0,362.0 125.8,350.5 129.5,339.1 133.3,327.8 137.1,316.9 140.8,306.2 144.6,296.0 148.3,286.3 152.1,277.2 155.9,268.7 159.6,260.9 163.4,253.9 167.2,247.7 170.9,242.4 174.7,238.0 178.5,234.5 182.2,232.0 186.0,230.5 189.8,230.0 193.5,230.5 197.3,232.0 201.0,234.5 204.8,238.0 208.6,242.4 212.3,247.7 216.1,253.9 219.9,260.9 223.6,268.7 227.4,277.2 231.2,286.3 234.9,296.0 238.7,306.2 242.4,316.9 246.2,327.8 250.0,339.1 253.7,350.5 257.5,362.0 261.3,373.5 265.0,384.9 268.8,396.2 272.6,407.1 276.3,417.8 280.1,428.0 283.8,437.7 287.6,446.8 291.4,455.3 295.1,463.1 298.9,470.1 302.7,476.3 306.4,481.6 310.2,486.0 314.0,489.5 317.7,492.0 321.5,493.5 325.2,494.0 329.0,493.5 332.8,492.0 336.5,489.5 340.3,486.0 344.1,481.6 347.8,476.3 351.6,470.1 355.4,463.1 359.1,455.3 362.9,446.8 366.7,437.7 370.4,428.0 374.2,417.8 377.9,407.1 381.7,396.2 385.5,384.9 389.2,373.5 393.0,362.0 396.8,350.5 400.5,339.1 404.3,327.8 408.1,316.9 411.8,306.2 415.6,296.0 419.3,286.3 423.1,277.2 426.9,268.7 430.6,260.9 434.4,253.9 438.2,247.7 441.9,242.4 445.7,238.0 449.5,234.5 453.2,232.0 457.0,230.5 460.8,230.0 464.5,230.5 468.3,232.0 472.0,234.5 475.8,238.0 479.6,242.4 483.3,247.7 487.1,253.9 490.9,260.9 494.6,268.7 498.4,277.2 502.2,286.3 505.9,296.0 509.7,306.2 513.4,316.9 517.2,327.8 521.0,339.1 524.7,350.5 528.5,362.0 532.3,373.5 536.0,384.9 539.8,396.2 543.6,407.1 547.3,417.8 551.1,428.0 554.8,437.7 558.6,446.8 562.4,455.3 566.1,463.1 569.9,470.1 573.7,476.3 577.4,481.6 581.2,486.0 585.0,489.5 588.7,492.0 592.5,493.5 596.2,494.0 600.0,493.5 603.8,492.0 607.5,489.5 611.3,486.0 615.1,481.6 618.8,476.3 622.6,470.1 626.4,463.1 630.1,455.3 633.9,446.8 637.7,437.7 641.4,428.0 645.2,417.8 648.9,407.1 652.7,396.2 656.5,384.9 660.2,373.5 664.0,362.0" fill="none" stroke="#ff6f00" stroke-width="4" stroke-linejoin="round"/><polyline points="122.0,230.0 125.8,230.5 129.5,232.0 133.3,234.5 137.1,238.0 140.8,242.4 144.6,247.7 148.3,253.9 152.1,260.9 155.9,268.7 159.6,277.2 163.4,286.3 167.2,296.0 170.9,306.2 174.7,316.9 178.5,327.8 182.2,339.1 186.0,350.5 189.8,362.0 193.5,373.5 197.3,384.9 201.0,396.2 204.8,407.1 208.6,417.8 212.3,428.0 216.1,437.7 219.9,446.8 223.6,455.3 227.4,463.1 231.2,470.1 234.9,476.3 238.7,481.6 242.4,486.0 246.2,489.5 250.0,492.0 253.7,493.5 257.5,494.0 261.3,493.5 265.0,492.0 268.8,489.5 272.6,486.0 276.3,481.6 280.1,476.3 283.8,470.1 287.6,463.1 291.4,455.3 295.1,446.8 298.9,437.7 302.7,428.0 306.4,417.8 310.2,407.1 314.0,396.2 317.7,384.9 321.5,373.5 325.2,362.0 329.0,350.5 332.8,339.1 336.5,327.8 340.3,316.9 344.1,306.2 347.8,296.0 351.6,286.3 355.4,277.2 359.1,268.7 362.9,260.9 366.7,253.9 370.4,247.7 374.2,242.4 377.9,238.0 381.7,234.5 385.5,232.0 389.2,230.5 393.0,230.0 396.8,230.5 400.5,232.0 404.3,234.5 408.1,238.0 411.8,242.4 415.6,247.7 419.3,253.9 423.1,260.9 426.9,268.7 430.6,277.2 434.4,286.3 438.2,296.0 441.9,306.2 445.7,316.9 449.5,327.8 453.2,339.1 457.0,350.5 460.8,362.0 464.5,373.5 468.3,384.9 472.0,396.2 475.8,407.1 479.6,417.8 483.3,428.0 487.1,437.7 490.9,446.8 494.6,455.3 498.4,463.1 502.2,470.1 505.9,476.3 509.7,481.6 513.4,486.0 517.2,489.5 521.0,492.0 524.7,493.5 528.5,494.0 532.3,493.5 536.0,492.0 539.8,489.5 543.6,486.0 547.3,481.6 551.1,476.3 554.8,470.1 558.6,463.1 562.4,455.3 566.1,446.8 569.9,437.7 573.7,428.0 577.4,417.8 581.2,407.1 585.0,396.2 588.7,384.9 592.5,373.5 596.2,362.0 600.0,350.5 603.8,339.1 607.5,327.8 611.3,316.9 615.1,306.2 618.8,296.0 622.6,286.3 626.4,277.2 630.1,268.7 633.9,260.9 637.7,253.9 641.4,247.7 645.2,242.4 648.9,238.0 652.7,234.5 656.5,232.0 660.2,230.5 664.0,230.0" fill="none" stroke="#c8000f" stroke-width="4" stroke-linejoin="round"/></svg><div class="a" style="left:358px;top:559px;width:82px;height:19px;border:3px solid #000"></div><div class="a" style="left:437px;top:575px;width:6px;height:6px;background:#000"></div><div class="a" style="left:438px;top:575px;width:3px;height:3px;background:#fff"></div><div class="a" style="left:1263px;top:133px;width:15px;height:4px;background:#000"></div><div class="trough" style="left:1263px;top:137px;width:15px;height:799px"></div><div class="sbb" style="left:1263px;top:137px;width:15px;height:15px"></div><svg class="a" style="left:1267px;top:142px" width="7" height="4"><path d="M0 4 L3.5 0 L7 4 z" fill="#000"/></svg><div class="sbb" style="left:1263px;top:151px;width:15px;height:166px;background:linear-gradient(90deg,#f8f7f5,#efebe7 50%,#e2dbd4)"></div><div class="a" style="left:1264px;top:152px;width:13px;height:4px;background:linear-gradient(90deg,#fcfbfa,#f1eeea)"></div><div class="a" style="left:1264px;top:156px;width:13px;height:1px;background:#d6cdc3"></div><div class="a" style="left:1264px;top:312px;width:13px;height:4px;background:linear-gradient(90deg,#fcfbfa,#f1eeea)"></div><div class="a" style="left:1264px;top:311px;width:13px;height:1px;background:#d6cdc3"></div><svg class="a" style="left:1267px;top:225px" width="9" height="18"><rect x="0" y="0" width="2" height="2" fill="#fff"/><rect x="0" y="0" width="1" height="1" fill="#bdb4aa"/><rect x="0" y="3" width="2" height="2" fill="#fff"/><rect x="0" y="3" width="1" height="1" fill="#bdb4aa"/><rect x="0" y="6" width="2" height="2" fill="#fff"/><rect x="0" y="6" width="1" height="1" fill="#bdb4aa"/><rect x="0" y="9" width="2" height="2" fill="#fff"/><rect x="0" y="9" width="1" height="1" fill="#bdb4aa"/><rect x="0" y="12" width="2" height="2" fill="#fff"/><rect x="0" y="12" width="1" height="1" fill="#bdb4aa"/><rect x="0" y="15" width="2" height="2" fill="#fff"/><rect x="0" y="15" width="1" height="1" fill="#bdb4aa"/><rect x="3" y="0" width="2" height="2" fill="#fff"/><rect x="3" y="0" width="1" height="1" fill="#bdb4aa"/><rect x="3" y="3" width="2" height="2" fill="#fff"/><rect x="3" y="3" width="1" height="1" fill="#bdb4aa"/><rect x="3" y="6" width="2" height="2" fill="#fff"/><rect x="3" y="6" width="1" height="1" fill="#bdb4aa"/><rect x="3" y="9" width="2" height="2" fill="#fff"/><rect x="3" y="9" width="1" height="1" fill="#bdb4aa"/><rect x="3" y="12" width="2" height="2" fill="#fff"/><rect x="3" y="12" width="1" height="1" fill="#bdb4aa"/><rect x="3" y="15" width="2" height="2" fill="#fff"/><rect x="3" y="15" width="1" height="1" fill="#bdb4aa"/><rect x="6" y="0" width="2" height="2" fill="#fff"/><rect x="6" y="0" width="1" height="1" fill="#bdb4aa"/><rect x="6" y="3" width="2" height="2" fill="#fff"/><rect x="6" y="3" width="1" height="1" fill="#bdb4aa"/><rect x="6" y="6" width="2" height="2" fill="#fff"/><rect x="6" y="6" width="1" height="1" fill="#bdb4aa"/><rect x="6" y="9" width="2" height="2" fill="#fff"/><rect x="6" y="9" width="1" height="1" fill="#bdb4aa"/><rect x="6" y="12" width="2" height="2" fill="#fff"/><rect x="6" y="12" width="1" height="1" fill="#bdb4aa"/><rect x="6" y="15" width="2" height="2" fill="#fff"/><rect x="6" y="15" width="1" height="1" fill="#bdb4aa"/></svg><div class="sbb" style="left:1263px;top:921px;width:15px;height:15px"></div><svg class="a" style="left:1267px;top:927px" width="7" height="4"><path d="M0 0 L7 0 L3.5 4 z" fill="#000"/></svg><div class="a" style="left:2px;top:936px;width:274px;height:15px;background:#efebe7"></div><div class="nb" style="left:3px"></div><div class="nb" style="left:18px"></div><div class="nb" style="left:33px"></div><div class="nb" style="left:48px"></div><i class="a" style="left:7px;top:941px;width:1px;height:7px;background:#c2b8ad"></i><svg class="a" style="left:8px;top:941px" width="4" height="7"><path d="M4 0 L4 7 L0 3.5 z" fill="#c2b8ad"/></svg><svg class="a" style="left:22px;top:941px" width="4" height="7"><path d="M4 0 L4 7 L0 3.5 z" fill="#c2b8ad"/></svg><svg class="a" style="left:38px;top:941px" width="4" height="7"><path d="M0 0 L4 3.5 L0 7 z" fill="#c2b8ad"/></svg><svg class="a" style="left:52px;top:941px" width="4" height="7"><path d="M0 0 L4 3.5 L0 7 z" fill="#c2b8ad"/></svg><i class="a" style="left:57px;top:941px;width:1px;height:7px;background:#c2b8ad"></i><svg class="a" style="left:60px;top:936px" width="216" height="15" viewBox="60 936 216 15"><path d="M60 936.5h216" stroke="#000"/><path d="M180 936.5 L186.5 949.5 H242 L248 936.5" fill="#efebe7" stroke="#000" stroke-width="1.3" stroke-linejoin="round"/><path d="M121 936.5 L127.5 949.5 H182.5 L188.800 936.5" fill="#efebe7" stroke="#000" stroke-width="1.3" stroke-linejoin="round"/><path d="M62 935.5 L69 949.5 H124 L130 935.5z" fill="#fff"/><path d="M63 936 L69.300 949.5 H124 L129.600 936" fill="none" stroke="#000" stroke-width="1.700" stroke-linejoin="round"/><text x="71" y="946.500" font-size="12" letter-spacing=".4" font-weight="bold" font-family="DejaVu Sans,Liberation Sans,sans-serif">Sheet1</text><text x="134" y="946.500" font-size="12" fill="#777" font-family="DejaVu Sans,Liberation Sans,sans-serif">Sheet2</text><text x="193" y="946.500" font-size="12" fill="#777" font-family="DejaVu Sans,Liberation Sans,sans-serif">Sheet3</text></svg><div class="a" style="left:275px;top:936px;width:7px;height:15px;background:#f6f4f1;border:1px solid #000;border-top:0"></div><div class="trough" style="left:282px;top:936px;width:978px;height:15px"></div><div class="sbb" style="left:282px;top:936px;width:15px;height:15px"></div><svg class="a" style="left:287px;top:940px" width="4" height="7"><path d="M4 0 L4 7 L0 3.5 z" fill="#000"/></svg><div class="sbb" style="left:296px;top:936px;width:445px;height:15px;background:linear-gradient(#f8f7f5,#efebe7 50%,#e2dbd4)"></div><div class="a" style="left:297px;top:937px;width:4px;height:13px;background:linear-gradient(#fcfbfa,#f1eeea)"></div><div class="a" style="left:301px;top:937px;width:1px;height:13px;background:#d6cdc3"></div><div class="a" style="left:736px;top:937px;width:4px;height:13px;background:linear-gradient(#fcfbfa,#f1eeea)"></div><div class="a" style="left:735px;top:937px;width:1px;height:13px;background:#d6cdc3"></div><svg class="a" style="left:510px;top:940px" width="18" height="9"><rect x="0" y="0" width="2" height="2" fill="#fff"/><rect x="0" y="0" width="1" height="1" fill="#bdb4aa"/><rect x="0" y="3" width="2" height="2" fill="#fff"/><rect x="0" y="3" width="1" height="1" fill="#bdb4aa"/><rect x="0" y="6" width="2" height="2" fill="#fff"/><rect x="0" y="6" width="1" height="1" fill="#bdb4aa"/><rect x="3" y="0" width="2" height="2" fill="#fff"/><rect x="3" y="0" width="1" height="1" fill="#bdb4aa"/><rect x="3" y="3" width="2" height="2" fill="#fff"/><rect x="3" y="3" width="1" height="1" fill="#bdb4aa"/><rect x="3" y="6" width="2" height="2" fill="#fff"/><rect x="3" y="6" width="1" height="1" fill="#bdb4aa"/><rect x="6" y="0" width="2" height="2" fill="#fff"/><rect x="6" y="0" width="1" height="1" fill="#bdb4aa"/><rect x="6" y="3" width="2" height="2" fill="#fff"/><rect x="6" y="3" width="1" height="1" fill="#bdb4aa"/><rect x="6" y="6" width="2" height="2" fill="#fff"/><rect x="6" y="6" width="1" height="1" fill="#bdb4aa"/><rect x="9" y="0" width="2" height="2" fill="#fff"/><rect x="9" y="0" width="1" height="1" fill="#bdb4aa"/><rect x="9" y="3" width="2" height="2" fill="#fff"/><rect x="9" y="3" width="1" height="1" fill="#bdb4aa"/><rect x="9" y="6" width="2" height="2" fill="#fff"/><rect x="9" y="6" width="1" height="1" fill="#bdb4aa"/><rect x="12" y="0" width="2" height="2" fill="#fff"/><rect x="12" y="0" width="1" height="1" fill="#bdb4aa"/><rect x="12" y="3" width="2" height="2" fill="#fff"/><rect x="12" y="3" width="1" height="1" fill="#bdb4aa"/><rect x="12" y="6" width="2" height="2" fill="#fff"/><rect x="12" y="6" width="1" height="1" fill="#bdb4aa"/><rect x="15" y="0" width="2" height="2" fill="#fff"/><rect x="15" y="0" width="1" height="1" fill="#bdb4aa"/><rect x="15" y="3" width="2" height="2" fill="#fff"/><rect x="15" y="3" width="1" height="1" fill="#bdb4aa"/><rect x="15" y="6" width="2" height="2" fill="#fff"/><rect x="15" y="6" width="1" height="1" fill="#bdb4aa"/></svg><div class="sbb" style="left:1245px;top:936px;width:15px;height:15px"></div><svg class="a" style="left:1251px;top:940px" width="4" height="7"><path d="M0 0 L4 3.5 L0 7 z" fill="#000"/></svg><div class="a" style="left:1260px;top:936px;width:3px;height:15px;background:#000"></div><div class="a" style="left:0;top:951px;width:1280px;height:2px;background:#f9f8f6"></div><div class="sf" style="left:5px;width:287px;text-align:left;padding-left:4px">Sheet 1 / 3</div><div class="sf" style="left:296px;width:331px;text-align:left;padding-left:4px">PageStyle_Sheet1</div><div class="sf" style="left:631px;width:49px;text-align:center;padding-left:0px">100%</div><div class="sf" style="left:684px;width:50px;text-align:left;padding-left:0px"></div><div class="sf" style="left:738px;width:43px;text-align:center;padding-left:0px">STD</div><div class="sf" style="left:785px;width:27px;text-align:center;padding-left:0px">*</div><div class="sf" style="left:816px;width:25px;text-align:left;padding-left:0px"></div><div class="sf" style="left:845px;width:430px;text-align:center;padding-left:0px">Sum=0</div><div class="a" style="left:0;top:973px;width:1280px;height:1px;background:#a89f95"></div></div>
</body></html>
